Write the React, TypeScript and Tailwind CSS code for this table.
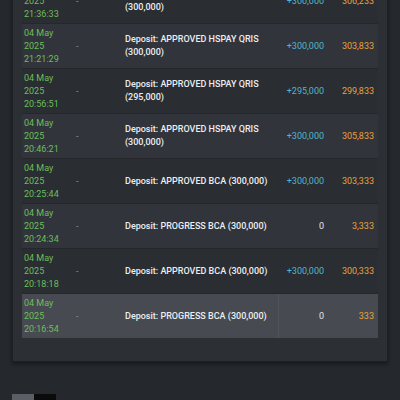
import React from "react";

type Row = {
  day: string;
  time: string;
  desc: string;
  amount: string;
  balance: string;
};

const ROWS: Row[] = [
  { day: "04 May", time: "21:36:33", desc: "Deposit: APPROVED HSPAY QRIS (300,000)", amount: "+300,000", balance: "306,233" },
  { day: "04 May", time: "21:21:29", desc: "Deposit: APPROVED HSPAY QRIS (300,000)", amount: "+300,000", balance: "303,833" },
  { day: "04 May", time: "20:56:51", desc: "Deposit: APPROVED HSPAY QRIS (295,000)", amount: "+295,000", balance: "299,833" },
  { day: "04 May", time: "20:46:21", desc: "Deposit: APPROVED HSPAY QRIS (300,000)", amount: "+300,000", balance: "305,833" },
  { day: "04 May", time: "20:25:44", desc: "Deposit: APPROVED BCA (300,000)", amount: "+300,000", balance: "303,333" },
  { day: "04 May", time: "20:24:34", desc: "Deposit: PROGRESS BCA (300,000)", amount: "0", balance: "3,333" },
  { day: "04 May", time: "20:18:18", desc: "Deposit: APPROVED BCA (300,000)", amount: "+300,000", balance: "300,333" },
  { day: "04 May", time: "20:16:54", desc: "Deposit: PROGRESS BCA (300,000)", amount: "0", balance: "333" },
];

export default function App() {
  return (
    <div
      className="h-[400px] w-[400px] overflow-hidden bg-[#25282c] text-[9px] leading-[13px]"
      style={{ fontFamily: "Roboto, 'Liberation Sans', sans-serif" }}
    >
      <div className="mx-[12px] -mt-[23px] border border-[#1d1f23] bg-[#2c2f34] px-[9px] pb-[23px] shadow-[0_2px_4px_rgba(0,0,0,0.4)]">
        {ROWS.map((r, i) => {
          const last = i === ROWS.length - 1;
          const bg = last ? "bg-[#474a51]" : i % 2 === 1 ? "bg-[#31343a]" : "bg-[#2a2d32]";
          return (
            <div
              key={r.time}
              className={`grid h-[45px] grid-cols-[50px_49px_157px_50px_50px] items-center border-t border-[#25272b] ${bg}`}
            >
              <div className="pl-[2px] text-[#6cbf5c]">
                <div>{r.day}</div>
                <div>2025</div>
                <div>{r.time}</div>
              </div>
              <div className="pl-[4px] text-[#8a8d93]">-</div>
              <div className="flex h-full items-center pl-[4px] pr-[4px] font-medium text-[#eceef1]">
                {r.desc}
              </div>
              <div
                className={`flex h-full items-center justify-end pr-[4px] ${
                  r.amount === "0" ? "text-[#e4e6ea]" : "text-[#4fb6cf]"
                } ${last ? "border-l border-[#50535a]" : ""}`}
              >
                {r.amount}
              </div>
              <div className="pr-[4px] text-right text-[#e8a23c]">{r.balance}</div>
            </div>
          );
        })}
      </div>
      <div className="mx-[12px] mt-[32px] flex">
        <div className="h-[22px] w-[22px] bg-[#5b5e64]" />
        <div className="h-[22px] w-[22px] bg-[#0b0b0c]" />
      </div>
    </div>
  );
}
